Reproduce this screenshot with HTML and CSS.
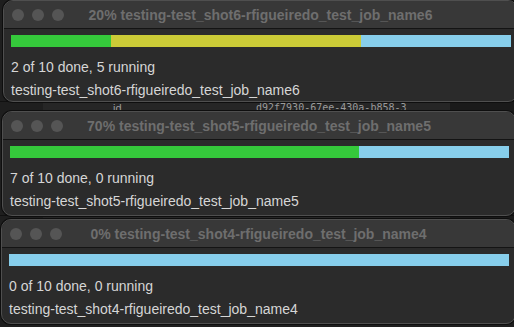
FILE: index.html
```html
<!DOCTYPE html>
<html lang="en">
<head>
    <meta charset="UTF-8">
    <title>Job progress</title>
    <link rel="stylesheet" href="styles.css">
</head>
<body>
    <div class="desktop">
        <!-- table of the app behind the windows -->
        <div class="backdrop">
            <div class="row row-a"><span class="cell-id">id</span><span class="cell-uuid">d92f7930-67ee-430a-b858-3</span></div>
            <div class="row row-b"></div>
        </div>

        <div class="window win-1">
            <div class="titlebar">
                <div class="lights"><span></span><span></span><span></span></div>
                <div class="title">20% testing-test_shot6-rfigueiredo_test_job_name6</div>
            </div>
            <div class="body">
                <div class="bar">
                    <div class="seg done" style="width: 20%"></div>
                    <div class="seg running" style="width: 50%"></div>
                    <div class="seg queued" style="width: 30%"></div>
                </div>
                <p class="status">2 of 10 done, 5 running</p>
                <p class="name">testing-test_shot6-rfigueiredo_test_job_name6</p>
            </div>
        </div>

        <div class="window win-2">
            <div class="titlebar">
                <div class="lights"><span></span><span></span><span></span></div>
                <div class="title">70% testing-test_shot5-rfigueiredo_test_job_name5</div>
            </div>
            <div class="body">
                <div class="bar">
                    <div class="seg done" style="width: 70%"></div>
                    <div class="seg queued" style="width: 30%"></div>
                </div>
                <p class="status">7 of 10 done, 0 running</p>
                <p class="name">testing-test_shot5-rfigueiredo_test_job_name5</p>
            </div>
        </div>

        <div class="window win-3">
            <div class="titlebar">
                <div class="lights"><span></span><span></span><span></span></div>
                <div class="title">0% testing-test_shot4-rfigueiredo_test_job_name4</div>
            </div>
            <div class="body">
                <div class="bar">
                    <div class="seg queued" style="width: 100%"></div>
                </div>
                <p class="status">0 of 10 done, 0 running</p>
                <p class="name">testing-test_shot4-rfigueiredo_test_job_name4</p>
            </div>
        </div>
    </div>
</body>
</html>
```

FILE: styles.css
```css
html, body {
    margin: 0;
    padding: 0;
    background-color: #1c1c1c;
    overflow: hidden;
}
.desktop {
    position: relative;
    width: 514px;
    height: 327px;
    font-family: 'Helvetica Neue', 'Liberation Sans', Arial, sans-serif;
}
.backdrop {
    position: absolute;
    inset: 0;
    background-color: #1e1e1e;
}
.row {
    position: absolute;
    left: 0;
    right: 0;
    height: 14px;
    border-top: 1px solid #111;
    background: linear-gradient(to right, #1e1e1e 0 43px, #262626 43px 450px, #1a1a1a 450px);
    color: #9a9a9a;
    font-size: 11px;
}
.row-a { top: 101px; }
.row-b { top: 215px; }
.cell-id {
    position: absolute;
    left: 113px;
    top: 0;
    font-family: 'Liberation Sans', sans-serif;
}
.cell-uuid {
    position: absolute;
    left: 256px;
    top: 0;
    font-family: 'DejaVu Sans Mono', monospace;
    font-size: 10px;
}
.window {
    position: absolute;
    background-color: #2b2b2b;
    border: 1px solid #4f4f4f;
    border-radius: 10px;
    overflow: hidden;
    box-shadow: 0 0 0 1px #0e0e0e;
}
.win-1 { left: 3px; top: 0; width: 513px; height: 100px; }
.win-2 { left: 2px; top: 111px; width: 512px; height: 103px; }
.win-3 { left: 1px; top: 219px; width: 513px; height: 103px; }
.titlebar {
    position: relative;
    height: 27px;
    background-color: #383838;
    border-bottom: 1px solid #141414;
    display: flex;
    align-items: center;
}
.lights {
    display: flex;
    gap: 8px;
    padding-left: 8px;
}
.lights span {
    width: 12px;
    height: 12px;
    border-radius: 50%;
    background-color: #555;
}
.title {
    position: absolute;
    left: 0;
    right: 0;
    text-align: center;
    color: #6e6e6e;
    font-weight: bold;
    font-size: 14px;
}
.body {
    padding: 6px 6px 0 7px;
}
.bar {
    display: flex;
    height: 12px;
}
.seg { height: 100%; }
.done { background-color: #35c93b; }
.running { background-color: #cbcb37; }
.queued { background-color: #87ceeb; }
.status, .name {
    margin: 0;
    color: #d6d6d6;
    font-size: 14px;
    line-height: 16px;
}
.status { margin-top: 12px; }
.name { margin-top: 7px; }
```
